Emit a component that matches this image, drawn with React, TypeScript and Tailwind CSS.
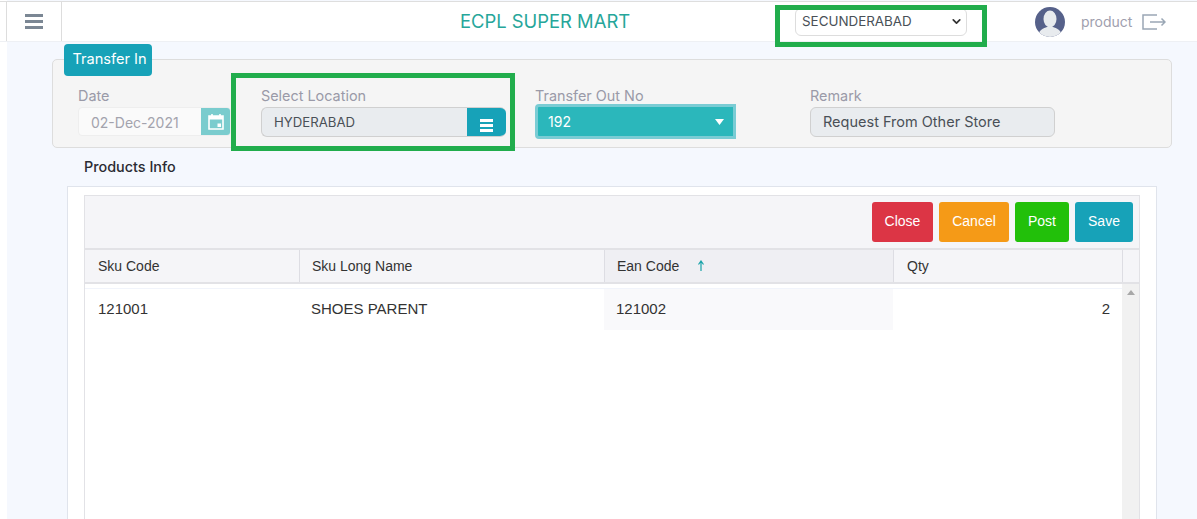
import { ChevronDown } from "lucide-react";

const poppins = "font-['Inter','Noto_Sans',sans-serif]";

function Highlight({ className }: { className: string }) {
  return <div className={"pointer-events-none absolute border-[5px] border-[#21ad4c] " + className} />;
}

function Field({ label, width, children }: { label: string; width: string; children: React.ReactNode }) {
  return (
    <div className={"flex flex-col " + width}>
      <label className="h-[21px] text-[14.4px] leading-[20px] text-[#9a9aa8]">{label}</label>
      {children}
    </div>
  );
}

function Header() {
  return (
    <header className="mt-[1px] flex h-[41px] border-t border-b border-t-[#dedede] border-b-[#eef0f4] bg-white">
      <div className="ml-[6px] flex w-[56px] items-center justify-center border-x border-[#dddddd]">
        <div className="flex w-[18px] flex-col gap-[3px]">
          <span className="h-[3px] bg-[#7b8794]" />
          <span className="h-[3px] bg-[#7b8794]" />
          <span className="h-[3px] bg-[#7b8794]" />
        </div>
      </div>
      <div className="w-[398px] shrink-0" />
      <div className="flex w-[335px] shrink-0 items-center text-[18.4px] text-[#26a69a]">ECPL SUPER MART</div>
      <div className="flex items-center">
        <div className="flex h-[28px] w-[172px] items-center justify-between rounded-[6px] border border-[#dddddd] pl-[6px] pr-[3px] text-[13.4px] text-[#495057]">
          SECUNDERABAD
          <ChevronDown size={13} strokeWidth={3.2} className="text-[#333]" />
        </div>
      </div>
      <div className="ml-[68px] flex items-center">
        <svg width="30" height="30" viewBox="0 0 30 30" aria-hidden>
          <clipPath id="avatar">
            <circle cx="15" cy="15" r="15" />
          </clipPath>
          <g clipPath="url(#avatar)">
            <rect width="30" height="30" fill="#56618a" />
            <ellipse cx="15" cy="12" rx="6.5" ry="8.5" fill="#e8ebee" />
            <path d="M3 30c0-7 6-9 9-10h6c3 1 9 3 9 10z" fill="#e8ebee" />
          </g>
        </svg>
        <span className="ml-[16px] w-[52px] text-[14px] text-[#a0a0ae]">product</span>
        <svg width="24" height="16" viewBox="0 0 24 16" fill="none" stroke="#9aa7b5" strokeWidth="1.5" className="ml-[9px]" aria-hidden>
          <path d="M15 1H1v14h14" />
          <path d="M8 8h15M19.5 4.5 23 8l-3.5 3.5" />
        </svg>
      </div>
    </header>
  );
}

function CalendarIcon() {
  return (
    <svg width="16" height="17" viewBox="0 0 16 17" aria-hidden>
      <path d="M1 3h14v13H1z" fill="none" stroke="#fff" strokeWidth="1.6" />
      <path d="M1 3h14v3.5H1z" fill="#fff" />
      <path d="M4 1v3M12 1v3" stroke="#fff" strokeWidth="1.6" />
      <path d="M9.5 10.5H13V14H9.5z" fill="#fff" />
    </svg>
  );
}

function FormPanel() {
  return (
    <div className="relative ml-[52px] mr-[25px] mt-[17px] h-[89px] rounded-[5px] border border-[#dddddd] bg-[#f5f5f5]">
      <div className="absolute -top-[16px] left-[11px] flex h-[32px] w-[88px] items-center justify-center rounded-[4px] bg-[#17a2b8] pl-[3px] text-[14.6px] text-white">
        Transfer In
      </div>
      <Highlight className="left-[178px] top-[13px] h-[78px] w-[284px]" />
      <div className="flex pl-[25px] pt-[26px]">
        <Field label="Date" width="w-[183px]">
          <div className="flex h-[29px] w-[153px] items-center overflow-hidden rounded-[4px] border border-[#eeeeee] bg-[#fafafa]">
            <span className="flex-1 pl-[12px] pt-[1px] text-[14px] text-[#a3a3ad]">02-Dec-2021</span>
            <span className="flex h-full w-[29px] items-center justify-center bg-[#7accce]">
              <CalendarIcon />
            </span>
          </div>
        </Field>
        <Field label="Select Location" width="w-[274px]">
          <div className="flex h-[30px] w-[245px] overflow-hidden rounded-[6px] border border-r-0 border-[#d0d0d0] bg-[#e9ecef]">
            <span className="flex flex-1 items-center pl-[12px] pt-[1px] text-[13.2px] text-[#495057]">HYDERABAD</span>
            <span className="flex w-[39px] flex-col items-center justify-end gap-[2px] bg-[#17a2b8] pb-[4px]">
              <i className="h-[3px] w-[13px] bg-white" />
              <i className="h-[3px] w-[13px] bg-white" />
              <i className="h-[3px] w-[13px] bg-white" />
            </span>
          </div>
        </Field>
        <Field label="Transfer Out No" width="w-[275px]">
          <div className="-mt-[3px] flex h-[35px] w-[201px] items-center justify-between rounded-l-[4px] border-[3px] border-[#7accd4] bg-[#2bb7bb] pl-[10px] pr-[9px] text-[14px] text-white">
            192
            <svg width="9" height="6" viewBox="0 0 9 6" aria-hidden>
              <path d="M0 0h9L4.5 6z" fill="#fff" />
            </svg>
          </div>
        </Field>
        <Field label="Remark" width="w-[245px]">
          <div className="flex h-[30px] items-center rounded-[6px] border border-[#d0d0d0] bg-[#e9ecef] pl-[12px] text-[14.5px] text-[#495057]">
            Request From Other Store
          </div>
        </Field>
      </div>
    </div>
  );
}

function ActionButton({ label, color, width }: { label: string; color: string; width: string }) {
  return (
    <button className={"h-[40px] rounded-[3px] pb-[2px] text-[14px] text-white " + color + " " + width}>{label}</button>
  );
}

function HeaderCell({ width, active, children }: { width: string; active?: boolean; children: React.ReactNode }) {
  return (
    <div className={"flex h-full items-center border-r border-[#dddde3] " + width + (active ? " bg-[#efeff3]" : "")}>
      {children}
    </div>
  );
}

function ProductsTable() {
  return (
    <div className="ml-[67px] mr-[40px] flex h-[333px] flex-col overflow-hidden border border-b-0 border-[#e0e4ec] bg-white px-[16px] pt-[8px]">
      <div className="flex flex-1 flex-col border border-b-0 border-[#e2e2e6] font-['Liberation_Sans',sans-serif] text-[14px] text-[#333333]">
        <div className="flex h-[52px] shrink-0 items-start justify-end gap-[6px] bg-[#f5f5f8] pr-[6px] pt-[6px]">
          <ActionButton label="Close" color="bg-[#dc3545]" width="w-[61px]" />
          <ActionButton label="Cancel" color="bg-[#f59a17]" width="w-[70px]" />
          <ActionButton label="Post" color="bg-[#22c00a]" width="w-[54px]" />
          <ActionButton label="Save" color="bg-[#17a2b8]" width="w-[58px]" />
        </div>
        <div className="flex h-[36px] shrink-0 border-y-2 border-y-[#e2e2e6] bg-[#f5f5f8]">
          <HeaderCell width="w-[215px] pl-[13px]">Sku Code</HeaderCell>
          <HeaderCell width="w-[305px] pl-[12px]">Sku Long Name</HeaderCell>
          <HeaderCell width="w-[289px] pl-[12px]" active>
            Ean Code
            <svg width="8" height="12" viewBox="0 0 8 12" className="ml-[18px]" aria-hidden>
              <path d="M4 11V2M1.5 4.5 4 1l2.5 3.5" fill="none" stroke="#17a2a8" strokeWidth="1.2" />
            </svg>
          </HeaderCell>
          <HeaderCell width="w-[229px] pl-[13px]">Qty</HeaderCell>
        </div>
        <div className="flex flex-1">
          <div className="flex-1 pt-[4px]">
            <div className="flex h-[42px] items-center border-t border-[#f1f4fb] text-[15px]">
              <span className="w-[214px] pl-[13px]">121001</span>
              <span className="w-[305px] pl-[12px]">SHOES PARENT</span>
              <span className="flex h-full w-[289px] items-center bg-[#f9f9fb] pl-[12px]">121002</span>
              <span className="flex-1 pr-[12px] text-right">2</span>
            </div>
          </div>
          <div className="flex w-[17px] justify-center bg-[#f1f1f1] pt-[6px]">
            <svg width="8" height="5" viewBox="0 0 8 5" aria-hidden>
              <path d="M4 0l4 5H0z" fill="#a8a8a8" />
            </svg>
          </div>
        </div>
      </div>
    </div>
  );
}

export default function App() {
  return (
    <div className={"relative h-[519px] w-[1197px] overflow-hidden bg-white " + poppins}>
      <div className="absolute inset-y-0 left-[7px] right-0 bg-[#f5f8fe]" />
      <div className="relative">
        <Header />
        <div className="relative">
          <FormPanel />
          <div className="ml-[84px] flex h-[38px] items-center text-[14.4px] font-medium text-[#2b2b33]">Products Info</div>
          <ProductsTable />
        </div>
        <Highlight className="left-[775px] top-[4px] h-[42px] w-[212px]" />
      </div>
    </div>
  );
}
